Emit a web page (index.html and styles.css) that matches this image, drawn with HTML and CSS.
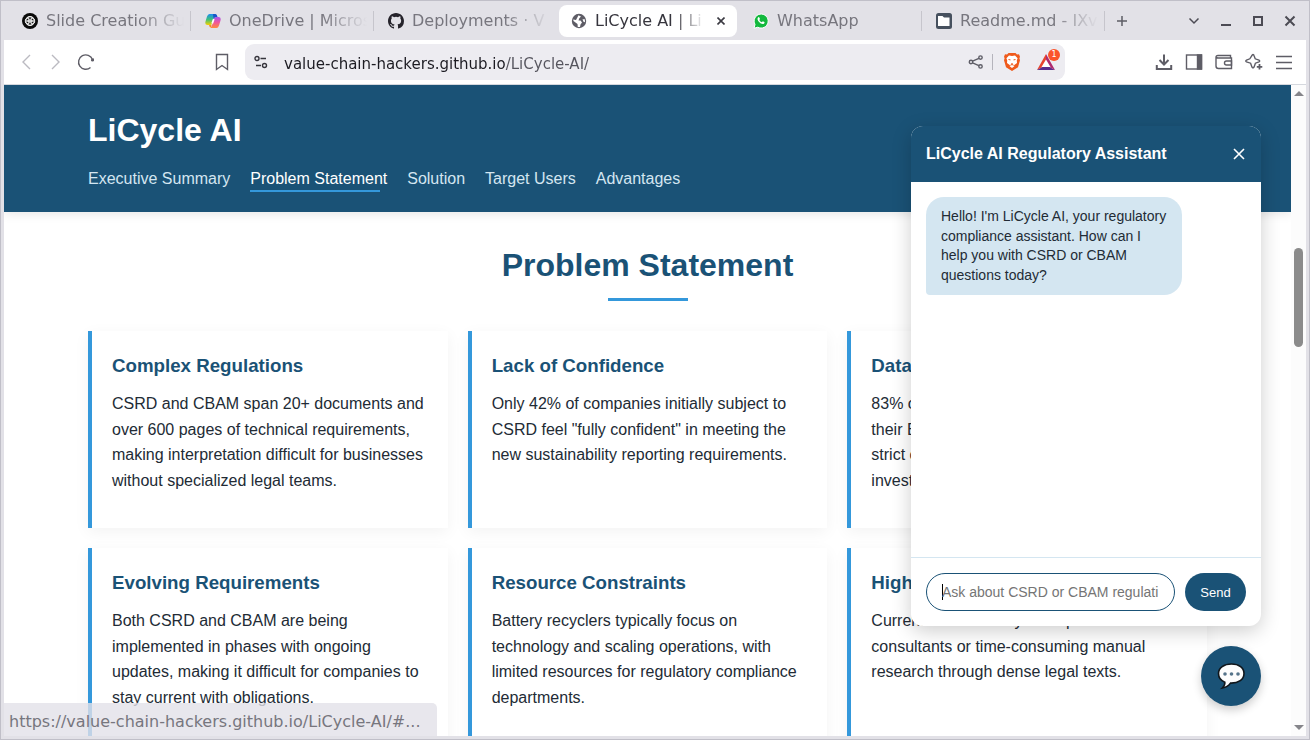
FILE: index.html
```html
<!DOCTYPE html>
<html lang="en">
<head>
<meta charset="utf-8">
<title>LiCycle AI | LiCycle</title>
<link rel="stylesheet" href="styles.css">
</head>
<body>
<div class="window">
  <div class="tabstrip">
    <div class="tabs">
      <button class="tab" type="button">
        <svg class="favicon" viewBox="0 0 16 16"><circle cx="8" cy="8" r="8" fill="#0b0b0b"/><g fill="none" stroke="#fff" stroke-width=".7"><ellipse cx="8" cy="6.300" rx="4" ry="2.600"/><ellipse cx="8" cy="6.300" rx="4" ry="2.600" transform="rotate(60 8 8)"/><ellipse cx="8" cy="6.300" rx="4" ry="2.600" transform="rotate(120 8 8)"/><ellipse cx="8" cy="6.300" rx="4" ry="2.600" transform="rotate(180 8 8)"/><ellipse cx="8" cy="6.300" rx="4" ry="2.600" transform="rotate(240 8 8)"/><ellipse cx="8" cy="6.300" rx="4" ry="2.600" transform="rotate(300 8 8)"/></g></svg>
        <span class="tab-title">Slide Creation Gu</span>
      </button>
      <button class="tab" type="button">
        <svg class="favicon" viewBox="0 0 16 16"><defs><linearGradient id="ca" x1="0" y1="0" x2="0" y2="1"><stop offset="0" stop-color="#1b8df0"/><stop offset=".5" stop-color="#3fc07a"/><stop offset="1" stop-color="#f5d000"/></linearGradient><linearGradient id="cb" x1="0" y1="0" x2="0" y2="1"><stop offset="0" stop-color="#a855f0"/><stop offset=".5" stop-color="#f0569a"/><stop offset="1" stop-color="#ff8a3c"/></linearGradient></defs><path d="M4.500 1h6L9 3.500 7 10.500Q6.500 12 5 12H2.500Q-.4 12 .5 8.500L2 3.500Q2.800 1 4.500 1Z" fill="url(#ca)"/><path d="M11.500 15h-6L7 12.500 9 5.500Q9.500 4 11 4h2.500q2.900 0 2 3.500L14 12.500Q13.200 15 11.500 15Z" fill="url(#cb)"/><path d="M8 1h2.500Q12 1 12.500 4H11Q9.500 4 9 5.500L8.500 7Z" fill="#1757c8"/><path d="M4 12h2.500L5.800 14.500Q4.500 14.500 4 12Z" fill="#f58a2a"/><path d="M8.800 6 7.200 10.500" stroke="#fff" stroke-width="1.800"/></svg>
        <span class="tab-title">OneDrive | Micros</span>
      </button>
      <button class="tab" type="button">
        <svg class="favicon" viewBox="0 0 16 16"><path fill="#25232b" d="M8 0C3.580 0 0 3.580 0 8c0 3.540 2.290 6.530 5.470 7.590.4.070.55-.17.55-.38v-1.490c-2.010.37-2.530-.49-2.690-.94-.09-.23-.48-.94-.82-1.130-.28-.15-.68-.52-.01-.53.63-.01 1.080.58 1.230.82.72 1.210 1.870.87 2.330.66.07-.52.28-.87.510-1.070-1.780-.2-3.640-.89-3.640-3.950 0-.87.310-1.590.82-2.150-.08-.2-.36-1.020.08-2.120 0 0 .67-.21 2.200.82a7.600 7.600 0 0 1 4 0c1.530-1.040 2.200-.82 2.200-.82.44 1.100.16 1.920.08 2.120.51.56.82 1.270.82 2.150 0 3.070-1.870 3.750-3.650 3.950.29.25.54.73.54 1.480v2.200c0 .21.15.46.55.38A8 8 0 0 0 16 8c0-4.420-3.580-8-8-8Z"/></svg>
        <span class="tab-title">Deployments · V</span>
      </button>
      <div class="tab tab-active">
        <svg class="favicon" viewBox="0 0 16 16"><circle cx="8" cy="8" r="7.200" fill="#5e5d66"/><path d="M7.500 2.300 10 3.500 8.300 5.200 7.500 7.500H9.500L11 9.500 9.500 11.500 9 14 6.800 14 6.500 11 2.500 8 2.200 6.500 5 7Z" fill="#fff"/><path d="M11.500 6.300h2.300l.2 3-1.500-.6Z" fill="#fff"/></svg>
        <span class="tab-title">LiCycle AI | Li</span>
        <button class="tab-close" type="button" aria-label="Close tab"><svg width="8" height="8" viewBox="0 0 8 8"><path d="m.5.5 7 7m0-7-7 7" stroke="#3b3a42" stroke-width="1.600"/></svg></button>
      </div>
      <button class="tab" type="button">
        <svg class="favicon" viewBox="0 0 16 16"><path d="M1 15.300 2 11.400A7 7 0 1 1 4.800 14.200Z" fill="#12b83d" stroke="#fff"/><path d="M5.300 4.300q.6-.5 1 .1l.7 1.500-.7 1q.9 1.700 2.600 2.300l.9-.9 1.600.8q.4.600-.3 1.300-1.200 1.200-3.700-.2Q4.800 8.500 4.500 6.300q0-1.300.8-2Z" fill="#fff"/></svg>
        <span class="tab-title">WhatsApp</span>
      </button>
      <button class="tab" type="button">
        <svg class="favicon" viewBox="0 0 16 16"><rect width="16" height="16" rx="2.500" fill="#46505e"/><path d="M2 3h4.500L8 4.500h5.500v8.500H2Z" fill="#fff"/></svg>
        <span class="tab-title">Readme.md - IXv</span>
      </button>
      <button class="new-tab" type="button" aria-label="New tab"><svg width="12" height="12" viewBox="0 0 12 12"><path d="M6 1v10M1 6h10" stroke="#5e5d66" stroke-width="1.500"/></svg></button>
    </div>
    <div class="window-controls">
      <button type="button" aria-label="Search tabs"><svg width="12" height="12" viewBox="0 0 12 12"><path d="m1.500 3.500 4.500 4.500 4.500-4.500" fill="none" stroke="#4c4b54" stroke-width="1.500"/></svg></button>
      <button type="button" aria-label="Minimize"><svg width="12" height="12" viewBox="0 0 12 12"><path d="M1 10h10" stroke="#4c4b54" stroke-width="2"/></svg></button>
      <button type="button" aria-label="Maximize"><svg width="12" height="12" viewBox="0 0 12 12"><rect x="2" y="2" width="8" height="8" fill="none" stroke="#4c4b54" stroke-width="2"/></svg></button>
      <button type="button" aria-label="Close window"><svg width="12" height="12" viewBox="0 0 12 12"><path d="m1.500 1.500 9 9m0-9-9 9" stroke="#4c4b54" stroke-width="2"/></svg></button>
    </div>
  </div>

  <div class="toolbar">
    <button class="tool" type="button" aria-label="Back"><svg class="dim" width="20" height="20" viewBox="0 0 20 20"><path d="m14 3-7 7 7 7"/></svg></button>
    <button class="tool" type="button" aria-label="Forward"><svg class="dim" width="20" height="20" viewBox="0 0 20 20"><path d="m6 3 7 7-7 7"/></svg></button>
    <button class="tool" type="button" aria-label="Reload"><svg width="20" height="20" viewBox="0 0 20 20"><path d="M14.500 15.500A7.200 7.200 0 1 1 16.500 7.500"/><circle cx="16.500" cy="8" r="1.500" fill="#5e5d66" stroke="none"/><path d="M17.800 6v3h-3Z" fill="#5e5d66" stroke="none"/></svg></button>
    <div class="address">
      <button class="tool" type="button" aria-label="Bookmark"><svg width="20" height="20" viewBox="0 0 20 20"><path d="M4.500 2.500h11V17.500L10 13.500l-5.500 4Z"/></svg></button>
      <div class="urlbar">
        <button class="site-info" type="button" aria-label="Site information"><svg width="14" height="14" viewBox="0 0 14 14"><circle cx="3" cy="3.500" r="2"/><path d="M6.500 3.500H12M2 10.500h5"/><circle cx="10.500" cy="10.500" r="2"/></svg></button>
        <input class="url" type="text" aria-label="Address" value="value-chain-hackers.github.io/LiCycle-AI/">
        <button class="share" type="button" aria-label="Share"><svg width="16" height="16" viewBox="0 0 16 16"><circle cx="3" cy="8" r="1.700"/><circle cx="12.500" cy="3.600" r="1.700"/><circle cx="12.500" cy="12.400" r="1.700"/><path d="m4.600 7.200 6.300-2.900M4.600 8.800l6.300 2.900"/></svg></button>
        <button class="shield" type="button" aria-label="Brave Shields"><svg width="16" height="18" viewBox="0 0 16 18"><path d="M4.500 0h7L13 1.500l2-.2 1 2.400-.6 1.500.6 2-2 7L8 18l-6-3.800-2-7 .6-2L0 3.700l1-2.400 2 .2Z" fill="#ef5a1c"/><path d="m5 2.600 3 .5 3-.5 2.600 2.600-.8 2.300.2 2.500-3 2.200.3 1L8 15l-2.300-1.800.3-1L3 10l.2-2.500-.8-2.300Z" fill="#fff"/><path class="face" d="m4.500 6.500 2 .4M11.500 6.500l-2 .4M7 10.500l1 .8 1-.8M6.300 12.300 8 11.500l1.700.8" fill="none"/></svg></button>
        <button class="rewards" type="button" aria-label="Brave Rewards"><svg width="18" height="16" viewBox="0 0 18 16"><path d="M9 0 0 16l9-5Z" fill="#e8432e"/><path d="M0 16h18l-9-5Z" fill="#5b2c8c"/><path d="m9 0 9 16-9-5Z" fill="#b02a6e"/><path d="m9 5.500-4.500 7.500h9Z" fill="#fff"/></svg><span class="badge">1</span></button>
      </div>
    </div>
    <button class="tool" type="button" aria-label="Downloads"><svg width="20" height="20" viewBox="0 0 20 20"><path d="M10 2.500v10M5.500 8l4.500 4.500L14.500 8M2.800 13v4h14.400v-4" stroke-width="2"/></svg></button>
    <button class="tool" type="button" aria-label="Sidebar"><svg width="20" height="20" viewBox="0 0 20 20"><rect x="2.500" y="3" width="15" height="14"/><path d="M13.500 3h4v14h-4Z" fill="#5e5d66"/></svg></button>
    <button class="tool" type="button" aria-label="Wallet"><svg width="20" height="20" viewBox="0 0 20 20"><path d="M16.500 6V3.500H4Q2 3.500 2 5.500V14q0 2.500 2.500 2.500h13V6H4Q2.300 6 2.100 5"/><path d="M17.500 9h-5q-2 0-2 2t2 2h5Z"/></svg></button>
    <button class="tool" type="button" aria-label="Leo AI"><svg width="20" height="20" viewBox="0 0 20 20"><path d="M9 2.500q.8 0 1 1l1.200 3.300 3.800 1.400q1.400.8 0 1.600l-3.600 1.400-1.400 4q-1 1.600-2 0l-1.400-4L2.500 9.800q-1.500-.8 0-1.600l3.300-1.400L8 3.500q.2-1 1-1Z"/><path d="M15.500 12v5.500M12.800 14.800h5.500" stroke-width="1.800"/></svg></button>
    <button class="tool" type="button" aria-label="Menu"><svg width="20" height="20" viewBox="0 0 20 20"><path d="M2 4.500h16M2 10.500h16M2 16.500h16"/></svg></button>
  </div>

  <div class="viewport">
    <div class="page">
      <header class="site-header">
        <div class="container">
          <h1>LiCycle AI</h1>
          <nav class="site-nav">
            <a href="#summary">Executive Summary</a>
            <a class="current" href="#problem">Problem Statement</a>
            <a href="#solution">Solution</a>
            <a href="#users">Target Users</a>
            <a href="#advantages">Advantages</a>
          </nav>
        </div>
      </header>
      <main class="container problem">
        <h2>Problem Statement</h2>
        <div class="cards">
          <article class="card"><h3>Complex Regulations</h3><p>CSRD and CBAM span 20+ documents and over 600 pages of technical requirements, making interpretation difficult for businesses without specialized legal teams.</p></article>
          <article class="card"><h3>Lack of Confidence</h3><p>Only 42% of companies initially subject to CSRD feel "fully confident" in meeting the new sustainability reporting requirements.</p></article>
          <article class="card"><h3>Data Challenges</h3><p>83% of companies struggle with collecting their ESG data accurately and must satisfy strict compliance requirements without investing in new tools.</p></article>
          <article class="card"><h3>Evolving Requirements</h3><p>Both CSRD and CBAM are being implemented in phases with ongoing updates, making it difficult for companies to stay current with obligations.</p></article>
          <article class="card"><h3>Resource Constraints</h3><p>Battery recyclers typically focus on technology and scaling operations, with limited resources for regulatory compliance departments.</p></article>
          <article class="card"><h3>High Costs</h3><p>Current solutions rely on expensive consultants or time-consuming manual research through dense legal texts.</p></article>
        </div>
      </main>
    </div>
    <div class="scrollbar"><span class="arrow-up"></span><span class="thumb"></span><span class="arrow-down"></span></div>

    <section class="chat">
      <div class="chat-header">
        <span>LiCycle AI Regulatory Assistant</span>
        <button class="chat-close" type="button" aria-label="Close chat"><svg width="14" height="14" viewBox="0 0 14 14"><path d="m2 2 10 10m0-10L2 12" stroke="#fff" stroke-width="1.600"/></svg></button>
      </div>
      <div class="messages"><p class="bubble">Hello! I'm LiCycle AI, your regulatory compliance assistant. How can I help you with CSRD or CBAM questions today?</p></div>
      <form class="chat-form">
        <input type="text" aria-label="Your question" placeholder="Ask about CSRD or CBAM regulati">
        <button type="button">Send</button>
      </form>
    </section>
    <button class="chat-toggle" type="button" aria-label="Toggle chat"><svg width="30" height="28" viewBox="0 0 30 28"><path d="M15.500 2C8 2 2.500 5.800 2.500 11.500c0 4.300 2.700 7.300 6.300 8.700.3 2-.8 4.200-2.500 5.800 3.700-.6 6.500-2.500 8.200-4.900C22.500 21.300 28 17.500 28 11.500 28 5.800 23 2 15.500 2Z" fill="#fdfdfd" stroke="#10161b" stroke-width="1.600"/><g fill="#56748a"><circle cx="9" cy="12" r="1.800"/><circle cx="15.500" cy="12" r="1.800"/><circle cx="22" cy="12" r="1.800"/></g></svg></button>
    <div class="status">https://value-chain-hackers.github.io/LiCycle-AI/#...</div>
  </div>
</div>
</body>
</html>
```
FILE: styles.css
```css
* { box-sizing: border-box; }
body { margin: 0; font-family: "Liberation Sans", Arial, sans-serif; color: #222b35; }
button { border: 0; padding: 0; background: none; font: inherit; color: inherit; }
h1, h2, h3, p { margin: 0; }
svg { display: block; flex: none; }

.window {
  display: flex; flex-direction: column; height: 100vh; overflow: hidden;
  padding: 0 3px 3px; background: #e2e1e7; border: 1px solid #c0bfc8;
}

/* Tab strip */
.tabstrip { display: flex; justify-content: space-between; flex: none; height: 39px; }
.tabs { display: flex; align-items: center; flex: 1; min-width: 0; padding-left: 4px; font: 16px/24px "DejaVu Sans", sans-serif; color: #77767e; }
.tab { display: flex; align-items: center; gap: 8px; flex: 0 1 183px; min-width: 0; height: 30px; padding: 0 2px 0 14px; text-align: left; border-right: 1px solid; border-image: linear-gradient(transparent 20%, #c6c5cc 20%, #c6c5cc 80%, transparent 80%) 1; }
.favicon { width: 16px; height: 16px; }
.tab-title { flex: 1; min-width: 0; padding-top: 1px; overflow: hidden; white-space: nowrap; mask-image: linear-gradient(to right, #000 calc(100% - 50px), transparent calc(100% - 4px)); }
.tab-active { flex-basis: 178px; height: 32px; margin: 0 2px; padding: 0 8px 0 12px; background: #fff; border: 0; border-radius: 8px; color: #36353d; }
.tab-active .tab-title { mask-image: linear-gradient(to right, #000 calc(100% - 32px), transparent); }
.tab:has(+ .tab-active) { border-image: none; border-color: transparent; }
.tab-close { display: grid; place-items: center; width: 16px; height: 16px; }
.new-tab { display: grid; place-items: center; width: 34px; height: 32px; }
.window-controls { display: flex; align-items: center; }
.window-controls button { display: grid; place-items: center; width: 32px; height: 32px; }

/* Toolbar */
.toolbar { display: flex; align-items: center; flex: none; height: 45px; padding: 0 7px; background: #fff; border-bottom: 1px solid #d5d8de; }
.toolbar svg { fill: none; stroke: #5e5d66; stroke-width: 1.4; }
.toolbar .dim { stroke: #bbbac1; }
.tool { display: grid; place-items: center; flex: none; width: 30px; height: 32px; }
.address { display: flex; align-items: center; gap: 8px; flex: 1; min-width: 0; margin: 0 84px 0 106px; }
.urlbar { display: flex; align-items: center; flex: 1; min-width: 0; height: 36px; padding: 0 10px 0 9px; background: #edecf1; border-radius: 9px; }
.site-info { flex: none; margin-right: 16px; }
.urlbar .site-info svg { stroke: #36353d; }
.url { flex: 1; min-width: 0; padding: 4px 0 0; border: 0; outline: 0; font: 15px/24px "DejaVu Sans", sans-serif; color: transparent; background: linear-gradient(to right, #1c1b22 222px, #55545d 222px) text; }
.share { flex: none; padding-right: 8px; border-right: 1px solid #b5b4bc; }
.shield { margin: 0 17px 0 11px; }
.urlbar .shield svg, .urlbar .rewards svg { stroke: none; }
.urlbar .face { stroke: #ef5a1c; stroke-width: 1; }
.rewards { position: relative; }
.badge { position: absolute; top: -5px; right: -5px; width: 12px; height: 12px; border-radius: 50%; background: #fb542b; color: #fff; font: 8px/12px "DejaVu Sans", sans-serif; text-align: center; }

/* Page */
.viewport { position: relative; display: flex; flex: 1; min-height: 0; background: #fff; }
.page { flex: 1; min-width: 0; overflow: hidden; line-height: 1.6; }
.container { max-width: 1199px; margin: 0 auto; padding: 0 40px; }
.site-header { padding: 20px 0; background: #1a5276; box-shadow: 0 2px 10px rgba(0, 0, 0, .1); color: #fff; }
h1 { margin-bottom: 10px; font-size: 32px; }
.site-nav { display: flex; gap: 20px; }
.site-nav a { color: #d4e6f1; text-decoration: none; }
.site-nav .current { color: #fff; background: linear-gradient(#3498db, #3498db) left bottom / 95% 2px no-repeat; }
.problem { padding-top: 28px; }
h2 { padding-bottom: 10px; margin-bottom: 30px; font-size: 32px; text-align: center; color: #1a5276; background: linear-gradient(#3498db, #3498db) center bottom / 80px 3px no-repeat; }
.cards { display: grid; grid-template-columns: repeat(3, 1fr); gap: 20px; }
.card { padding: 20px 20px 35px; border-left: 4px solid #3498db; background: #fff; box-shadow: 0 4px 15px rgba(0, 0, 0, .05); }
h3 { margin-bottom: 10px; color: #1a5276; }

.scrollbar { display: flex; flex-direction: column; align-items: center; flex: none; width: 15px; padding: 6px 0; background: #fcfcfc; }
.arrow-up, .arrow-down { border: 5px solid transparent; }
.arrow-up { border-top: 0; border-bottom-color: #85858a; }
.arrow-down { margin-top: auto; border-bottom: 0; border-top-color: #85858a; }
.thumb { width: 9px; height: 99px; margin-top: 152px; border-radius: 5px; background: #8b8b8b; }

/* Chat */
.chat { position: absolute; right: 45px; bottom: 110px; display: flex; flex-direction: column; width: 350px; height: 500px; overflow: hidden; border-radius: 12px; background: #fff; box-shadow: 0 5px 20px rgba(0, 0, 0, .2); }
.chat-header { display: flex; align-items: center; justify-content: space-between; height: 56px; padding: 0 15px; background: #1a5276; color: #fff; font-weight: bold; }
.messages { flex: 1; padding: 15px; }
.bubble { max-width: 80%; padding: 10px 15px; border-radius: 18px 18px 18px 4px; background: #d4e6f1; font-size: 14px; line-height: 1.4; }
.chat-form { display: flex; gap: 10px; padding: 15px; border-top: 1px solid #d4e6f1; }
.chat-form input { flex: 1; min-width: 0; height: 38px; padding: 0 15px; border: 1px solid #1a5276; border-radius: 20px; outline: 0; background: linear-gradient(#000, #000) 15px center / 1px 16px no-repeat #fff; font: 14px "Liberation Sans", Arial, sans-serif; }
.chat-form input::placeholder { color: #757575; }
.chat-form button { min-width: 61px; border-radius: 20px; background: #1a5276; color: #fff; font-size: 13px; }
.chat-toggle { position: absolute; right: 45px; bottom: 30px; display: grid; place-items: center; width: 60px; height: 60px; border-radius: 50%; background: #1a5276; box-shadow: 0 4px 10px rgba(0, 0, 0, .2); }

.status { position: absolute; left: 0; bottom: 0; padding: 7px 17px 2px 5px; border-radius: 0 5px 0 0; background: rgba(226, 225, 232, .8); color: #77767e; font: 16px/24px "DejaVu Sans", sans-serif; }
```
